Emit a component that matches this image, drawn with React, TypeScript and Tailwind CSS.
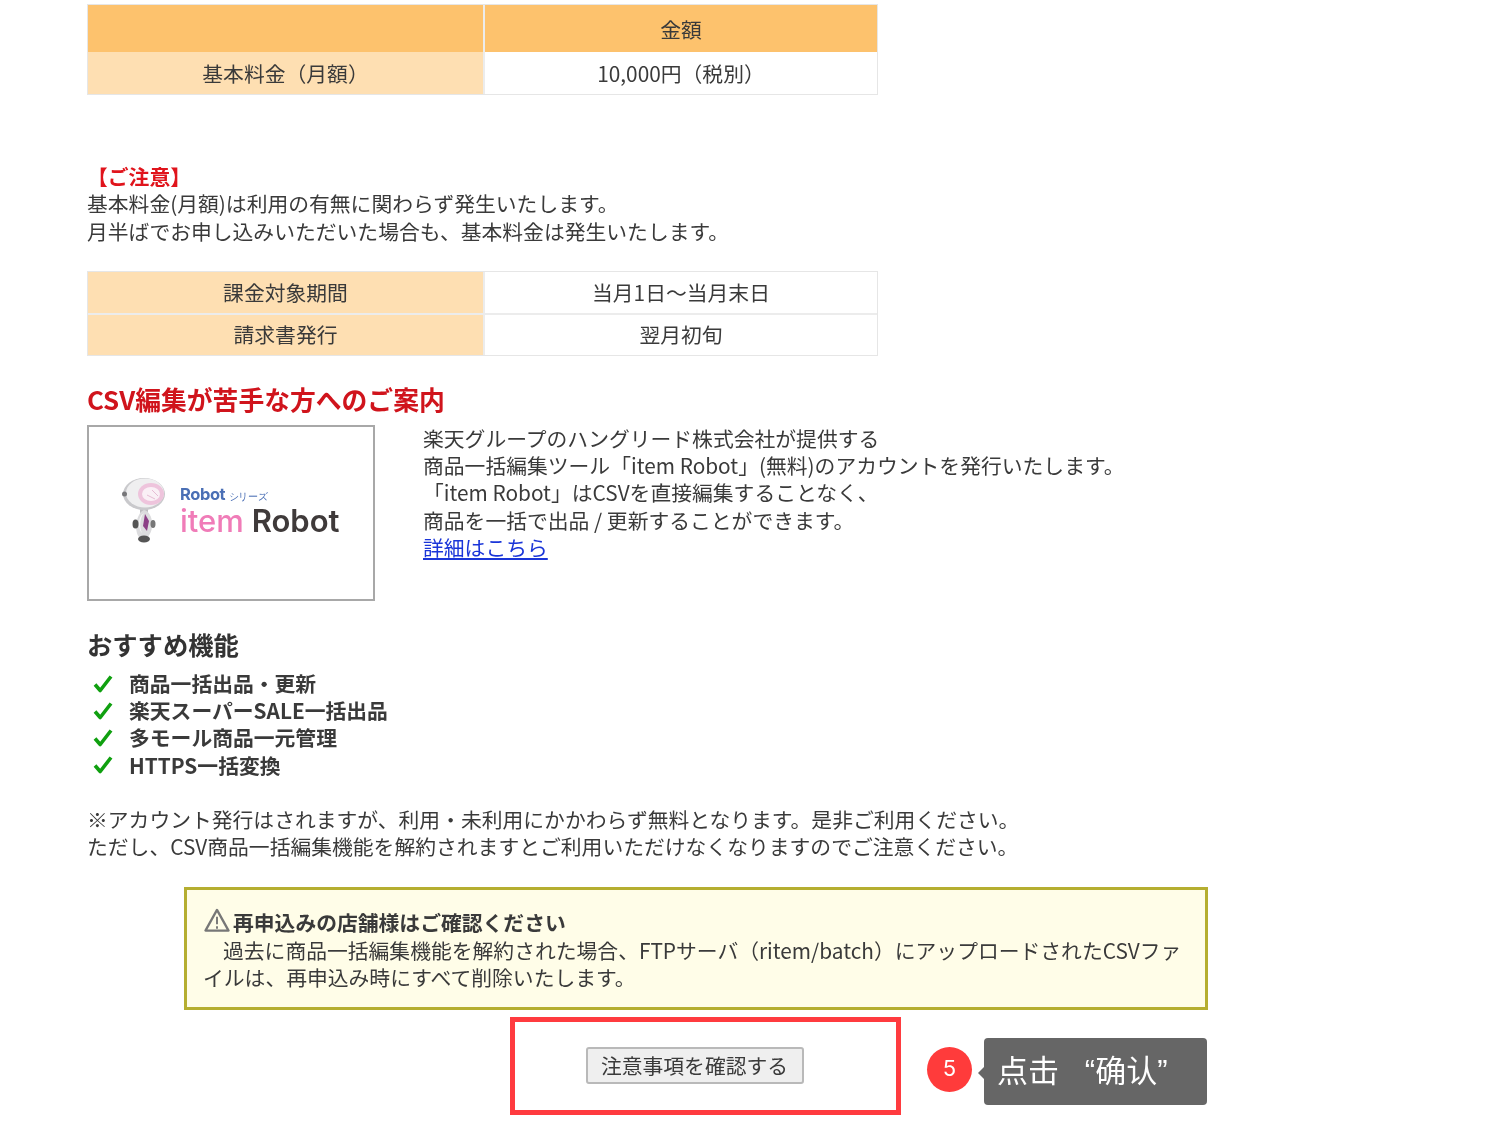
import React from 'react';

const FONT = "font-['Noto_Sans_CJK_JP','Noto_Sans',sans-serif]";

const Check = () => (
  <svg viewBox="0 0 20 20" className="w-[20px] h-[20px] shrink-0">
    <path d="M2 10.5 L7.2 16.5 L18 2.5" fill="none" stroke="#10a010" strokeWidth="3.6" strokeLinejoin="round" />
  </svg>
);

const RobotMascot = () => (
  <svg viewBox="0 0 44 66" className="w-[44px] h-[66px] -mt-[5px]">
    <rect x="18" y="28" width="8" height="10" fill="#bdbdc0" />
    <ellipse cx="22" cy="17" rx="21" ry="16" fill="#c9c9cc" />
    <ellipse cx="23" cy="16" rx="19" ry="14.5" fill="#efeff0" />
    <circle cx="2.5" cy="17" r="2.5" fill="#77777a" />
    <ellipse cx="29" cy="17" rx="13" ry="11" fill="#eec4dc" />
    <ellipse cx="29" cy="17" rx="9" ry="7" fill="#faf0f6" />
    <path d="M30 13 L36 19 M25 18 L33 22" stroke="#e6bcd4" strokeWidth="1" />
    <path d="M22 33 C14 36 12 54 17 60 C23 65 31 58 30 46 C30 40 27 34 22 33 Z" fill="#dcdcde" />
    <path d="M22 36 C18 40 17 50 20 56 C16 52 15 40 22 36 Z" fill="#f7f7f7" />
    <path d="M23 37 L27 44 L25 54 L21 49 Z" fill="#8c3f86" />
    <ellipse cx="13.5" cy="47" rx="3" ry="4.5" fill="#555" />
    <ellipse cx="31" cy="47" rx="2.5" ry="4" fill="#777" />
    <ellipse cx="22" cy="62" rx="6" ry="3.5" fill="#555" />
  </svg>
);

const features = ['商品一括出品・更新', '楽天スーパーSALE一括出品', '多モール商品一元管理', 'HTTPS一括変換'];

export default function App() {
  return (
    <div className={`${FONT} w-[1494px] h-[1145px] overflow-hidden bg-white pl-[87px] pt-[4px] text-[20.8px] leading-[27.3px] text-[#3a3a3a] blur-[0.5px]`}>
      {/* 料金テーブル */}
      <div className="w-[791px] grid grid-cols-[395px_1fr] border border-[#e6e6e6] bg-[#ececec] text-center gap-x-[2px]">
        <div className="h-[47px] bg-[#fdc26d]" />
        <div className="h-[47px] bg-[#fdc26d] flex items-center justify-center pt-[2px]">金額</div>
        <div className="h-[42px] bg-[#fedfb2] flex items-center justify-center pt-[2px]">基本料金（月額）</div>
        <div className="h-[42px] bg-white flex items-center justify-center pt-[2px]">10,000円（税別）</div>
      </div>

      <div className="mt-[68px] font-bold text-[#e0141c]">【ご注意】</div>
      <div>基本料金(月額)は利用の有無に関わらず発生いたします。</div>
      <div>月半ばでお申し込みいただいた場合も、基本料金は発生いたします。</div>

      <div className="mt-[26px] w-[791px] grid grid-cols-[395px_1fr] border border-[#e6e6e6] bg-[#ececec] text-center gap-x-[2px] gap-y-[2px]">
        <div className="h-[41px] bg-[#fedfb2] flex items-center justify-center">課金対象期間</div>
        <div className="h-[41px] bg-white flex items-center justify-center">当月1日～当月末日</div>
        <div className="h-[40px] bg-[#fedfb2] flex items-center justify-center">請求書発行</div>
        <div className="h-[40px] bg-white flex items-center justify-center">翌月初旬</div>
      </div>

      <h2 className="mt-[24px] text-[25.8px] leading-[37px] font-bold text-[#d0141c]">CSV編集が苦手な方へのご案内</h2>

      <div className="mt-[8px] flex items-start">
        <div className="w-[288px] h-[176px] border-2 border-[#a8a8a8] flex items-center pl-[33px] gap-[14px] shrink-0">
          <RobotMascot />
          <div className="font-['Inter',sans-serif] -mt-[4px]">
            <div className="text-[16.5px] leading-[18px] font-bold text-[#4a6fb5] tracking-tight">Robot <span className="text-[10px] font-normal">シリーズ</span></div>
            <div className="text-[31px] leading-[32px] font-semibold whitespace-nowrap">
              <span className="text-[#f07cb8] font-medium">item</span> <span className="text-[#3f3a3a]">Robot</span>
            </div>
          </div>
        </div>
        <div className="ml-[48px]">
          <div>楽天グループのハングリード株式会社が提供する</div>
          <div>商品一括編集ツール「item Robot」(無料)のアカウントを発行いたします。</div>
          <div>「item Robot」はCSVを直接編集することなく、</div>
          <div>商品を一括で出品 / 更新することができます。</div>
          <a className="text-[#1a35d8] underline" href="#">詳細はこちら</a>
        </div>
      </div>

      <h3 className="mt-[25px] text-[25.3px] leading-[36px] font-bold text-[#333]">おすすめ機能</h3>

      <ul className="mt-[8px] font-bold">
        {features.map(f => (
          <li key={f} className="flex items-center pl-[6px] gap-[16px]">
            <Check />
            <span>{f}</span>
          </li>
        ))}
      </ul>

      <div className="mt-[27px]">※アカウント発行はされますが、利用・未利用にかかわらず無料となります。是非ご利用ください。</div>
      <div>ただし、CSV商品一括編集機能を解約されますとご利用いただけなくなりますのでご注意ください。</div>

      {/* 再申込み注意 */}
      <div className="mt-[26px] ml-[97px] w-[1024px] h-[123px] border-[3px] border-[#b5ae30] bg-[#fffde8] pl-[16px] pr-[16px] pt-[19px]">
        <div className="flex items-center font-bold">
          <svg viewBox="0 0 28 26" className="w-[28px] h-[25px] shrink-0 -mt-[4px] text-[#777]" fill="none" stroke="currentColor">
            <path d="M14 2 L26 23.5 H2 Z" strokeWidth="2.4" strokeLinejoin="round" />
            <path d="M14 9 V17 M14 19 V21.5" strokeWidth="2" />
          </svg>
          <span className="ml-[2px]">再申込みの店舗様はご確認ください</span>
        </div>
        <div className="indent-[20px] mt-[1px]">過去に商品一括編集機能を解約された場合、FTPサーバ（ritem/batch）にアップロードされたCSVファイルは、再申込み時にすべて削除いたします。</div>
      </div>

      <div className="mt-[7px] ml-[423px] flex items-start">
        <div className="w-[391px] h-[98px] border-[5px] border-[#ff3b3f] flex items-center justify-center shrink-0 pr-[22px] pb-[0px]">
          <button className="w-[218px] h-[37px] border-2 border-[#b9b9b9] rounded-[3px] bg-[#efefef] text-[20.8px] leading-none text-[#3a3a3a] whitespace-nowrap">注意事項を確認する</button>
        </div>
        <div className="ml-[26px] mt-[30px] w-[45px] h-[45px] rounded-full bg-[#ff3b3b] text-white font-['Inter',sans-serif] flex items-center justify-center shrink-0 text-[22px] leading-none pb-[3px]">5</div>
        <div className="relative ml-[12px] mt-[21px] w-[223px] h-[67px] rounded-[4px] bg-[#666666] text-white text-[31px] leading-none flex items-center pl-[13px] font-['Liberation_Sans','Noto_Sans_CJK_SC',sans-serif] whitespace-pre">
          <span className="absolute -left-[6px] top-[29px] w-0 h-0 border-y-[6px] border-y-transparent border-r-[6px] border-r-[#666666]" />
          点击   “确认”
        </div>
      </div>
    </div>
  );
}
